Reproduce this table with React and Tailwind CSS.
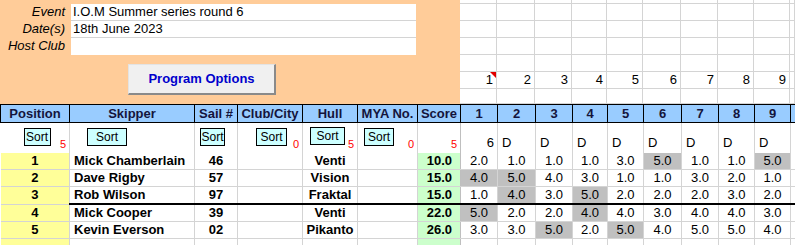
import React from "react";

const colW = ["w-[69px]","w-[125px]","w-[43px]","w-[65px]","w-[55px]","w-[60px]","w-[43px]","w-[37px]","w-[38px]","w-[37px]","w-[35px]","w-[36px]","w-[38px]","w-[37px]","w-[36px]","w-[36px]","w-[5px]"];
const rightW = ["w-[37px]","w-[38px]","w-[37px]","w-[35px]","w-[36px]","w-[38px]","w-[37px]","w-[36px]","w-[36px]","w-[5px]"];
const topRowH = ["h-[4px]","h-[17px]","h-[17px]","h-[17px]","h-[17px]","h-[17px]","h-[15px]"];

const headers = ["Position","Skipper","Sail #","Club/City","Hull","MYA No.","Score","1","2","3","4","5","6","7","8","9",""];

const data = [
  { pos: "1", name: "Mick Chamberlain", sail: "46", hull: "Venti", score: "10.0", r: ["2.0","1.0","1.0","1.0","3.0","5.0","1.0","1.0","5.0"], g: [5,8] },
  { pos: "2", name: "Dave Rigby", sail: "57", hull: "Vision", score: "15.0", r: ["4.0","5.0","4.0","3.0","1.0","1.0","3.0","2.0","1.0"], g: [0,1] },
  { pos: "3", name: "Rob Wilson", sail: "97", hull: "Fraktal", score: "15.0", r: ["1.0","4.0","3.0","5.0","2.0","2.0","2.0","3.0","2.0"], g: [1,3] },
  { pos: "4", name: "Mick Cooper", sail: "39", hull: "Venti", score: "22.0", r: ["5.0","2.0","2.0","4.0","4.0","3.0","4.0","4.0","3.0"], g: [0,3] },
  { pos: "5", name: "Kevin Everson", sail: "02", hull: "Pikanto", score: "26.0", r: ["3.0","3.0","5.0","2.0","5.0","4.0","5.0","5.0","4.0"], g: [2,4] },
];

function SortBtn({ cls }) {
  return (
    <div className={"h-[18px] bg-[#CCFFFF] border border-black flex items-center justify-center text-[12px] text-black leading-none " + cls}>
      Sort
    </div>
  );
}

function Red({ v }) {
  return <span className="ml-auto self-end mb-[2px] mr-[3px] text-[11px] leading-none text-[#ff0000]">{v}</span>;
}

export default function App() {
  return (
    <div className="w-[795px] h-[245px] overflow-hidden bg-white font-['Liberation_Sans',Arial,sans-serif] text-[13px] text-black">
      <div className="flex h-[104px]">
        <div className="w-[460px] h-[104px] shrink-0 bg-[#FFCC99] pt-[4px] flex flex-col">
          {[["Event","I.O.M Summer series round 6"],["Date(s)","18th June 2023"],["Host Club",""]].map(([l,v],i) => (
            <div key={l} className="flex h-[17px] leading-[16px]">
              <div className="w-[69px] text-right pr-[4px] italic">{l}</div>
              <div className={"ml-[2px] w-[345px] bg-white pl-[2px] " + (i < 2 ? "border-b border-[#d4d4d4]" : "")}>{v}</div>
            </div>
          ))}
          <div className="ml-[128px] mt-[9px] w-[148px] h-[31px] bg-[#f0f0f0] border-t border-l border-[#e3e3e3] border-r-2 border-b-2 border-r-[#8a8a8a] border-b-[#8a8a8a] flex items-center justify-center font-bold text-[#0000cc]">
            Program Options
          </div>
        </div>
        <div className="flex flex-col">
          {topRowH.map((h, ri) => (
            <div key={ri} className={"flex " + h}>
              {rightW.map((w, ci) => (
                <div key={ci} className={"relative border-r border-b border-[#d4d4d4] text-right pr-[3px] leading-[16px] " + w}>
                  {ri === 5 && ci < 9 ? String(ci + 1) : ""}
                  {ri === 5 && ci === 0 ? (
                    <svg className="absolute right-0 top-0" width="6" height="6" viewBox="0 0 6 6"><polygon points="0,0 6,0 6,6" fill="#e00000" /></svg>
                  ) : null}
                </div>
              ))}
            </div>
          ))}
        </div>
      </div>
      <table className="table-fixed border-collapse w-[795px]">
        <colgroup>
          {colW.map((w, i) => <col key={i} className={w} />)}
        </colgroup>
        <tbody>
          <tr className="h-[18px]">
            {headers.map((h, i) => (
              <td key={i} className="bg-[#99CCFF] border border-black p-0 text-center font-bold text-[#14143c] leading-[16px] whitespace-nowrap overflow-hidden">{h}</td>
            ))}
          </tr>
          <tr className="h-[30px]">
            <td className="p-0 align-top border-r border-[#d4d4d4]"><div className="flex h-[29px]"><SortBtn cls="ml-[23px] mt-[5px] w-[27px]" /><Red v="5" /></div></td>
            <td className="p-0 align-top border-r border-[#d4d4d4]"><div className="flex h-[29px]"><SortBtn cls="ml-[17px] mt-[5px] w-[40px]" /></div></td>
            <td className="p-0 align-top border-r border-[#d4d4d4]"><div className="flex h-[29px]"><SortBtn cls="ml-[5px] mt-[5px] w-[25px]" /></div></td>
            <td className="p-0 align-top border-r border-[#d4d4d4]"><div className="flex h-[29px]"><SortBtn cls="ml-[18px] mt-[5px] w-[31px]" /><Red v="0" /></div></td>
            <td className="p-0 align-top border-r border-[#d4d4d4]"><div className="flex h-[29px]"><SortBtn cls="ml-[7px] mt-[4px] w-[35px]" /><Red v="5" /></div></td>
            <td className="p-0 align-top border-r border-[#d4d4d4]"><div className="flex h-[29px]"><SortBtn cls="ml-[6px] mt-[5px] w-[30px]" /><Red v="0" /></div></td>
            <td className="p-0 align-top border-r border-[#bfbfbf]"><div className="flex h-[29px]"><Red v="5" /></div></td>
            <td className="p-0 pb-[2px] align-bottom border-r border-[#d4d4d4] text-right pr-[3px] leading-[16px]">6</td>
            {[0,1,2,3,4,5,6,7].map((i) => (
              <td key={i} className="p-0 pb-[2px] align-bottom border-r border-[#d4d4d4] text-left pl-[4px] leading-[16px]">D</td>
            ))}
            <td className="p-0"></td>
          </tr>
          {data.map((d, ri) => {
            const thick = ri === 2;
            const b = thick ? "border-b-2 border-b-black" : "border-b border-b-[#d4d4d4]";
            return (
              <tr key={ri} className="h-[17px] leading-[16px]">
                <td className="p-0 bg-[#FFFF99] text-center font-bold border-r border-b border-[#d4d4d4]">{d.pos}</td>
                <td className={"p-0 pl-[4px] font-bold whitespace-nowrap border-r border-r-[#d4d4d4] " + b}>{d.name}</td>
                <td className={"p-0 text-center font-bold border-r border-r-[#d4d4d4] " + b}>{d.sail}</td>
                <td className={"p-0 border-r border-r-[#d4d4d4] " + b}></td>
                <td className={"p-0 text-center font-bold border-r border-r-[#d4d4d4] " + b}>{d.hull}</td>
                <td className={"p-0 border-r border-r-[#d4d4d4] " + b}></td>
                <td className={"p-0 bg-[#CCFFCC] text-right pr-[8px] font-bold border-r border-r-[#bfbfbf] " + b}>{d.score}</td>
                {d.r.map((v, ci) => (
                  <td key={ci} className={"p-0 text-center border-r border-r-[#d4d4d4] " + b + (d.g.includes(ci) ? " bg-[#C0C0C0]" : "")}>{v}</td>
                ))}
                <td className={"p-0 " + b}></td>
              </tr>
            );
          })}
          <tr className="h-[17px]">
            <td className="p-0 bg-[#FFFF99] border-r border-[#d4d4d4]"></td>
            {[0,1,2,3,4,5].map((i) => (
              <td key={i} className={"p-0 border-r " + (i === 5 ? "border-[#bfbfbf] bg-[#CCFFCC]" : "border-[#d4d4d4]")}></td>
            ))}
            {[0,1,2,3,4,5,6,7,8].map((i) => (
              <td key={i} className="p-0 border-r border-[#d4d4d4]"></td>
            ))}
            <td className="p-0"></td>
          </tr>
        </tbody>
      </table>
    </div>
  );
}
